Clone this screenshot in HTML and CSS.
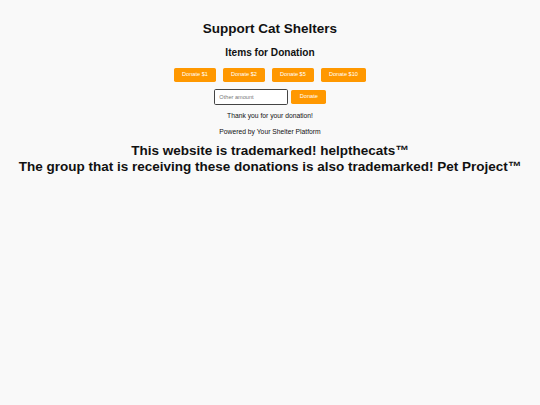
FILE: index.html
```html
<!DOCTYPE html>
<html lang="en">
<head>
<meta charset="utf-8">
<title>Support Cat Shelters</title>
<link rel="stylesheet" href="styles.css">
</head>
<body>
<main class="page">
  <h1 class="title">Support Cat Shelters</h1>
  <h2 class="subtitle">Items for Donation</h2>
  <div class="amounts">
    <button class="btn">Donate $1</button>
    <button class="btn">Donate $2</button>
    <button class="btn">Donate $5</button>
    <button class="btn">Donate $10</button>
  </div>
  <div class="custom">
    <input class="amount-input" type="text" placeholder="Other amount">
    <button class="btn">Donate</button>
  </div>
  <p class="thanks">Thank you for your donation!</p>
  <p class="powered">Powered by Your Shelter Platform</p>
  <div class="trademark">
    <div>This website is trademarked! helpthecats™</div>
    <div>The group that is receiving these donations is also trademarked! Pet Project™</div>
  </div>
</main>
</body>
</html>
```
FILE: styles.css
```css
html, body {
  margin: 0;
  padding: 0;
  background: #f9f9f9;
}
body {
  font-family: "Liberation Sans", Arial, sans-serif;
  color: #111;
}
.page {
  display: flex;
  flex-direction: column;
  align-items: center;
  text-align: center;
}
.title {
  font-size: 13.5px;
  line-height: 15.5px;
  font-weight: bold;
  margin: 20.6px 0 0;
}
.subtitle {
  font-size: 10.125px;
  line-height: 11.6px;
  font-weight: bold;
  margin: 10.6px 0 0;
}
.amounts {
  display: flex;
  gap: 6.3px;
  margin-top: 10px;
}
.btn {
  font-family: "Liberation Sans", Arial, sans-serif;
  font-size: 5.625px;
  line-height: 5.6px;
  padding: 4.2px 8.4px;
  background: #ff9800;
  color: #fff;
  border: none;
  border-radius: 1.7px;
  margin: 0;
}
.custom {
  display: flex;
  align-items: center;
  gap: 3.6px;
  margin-top: 6.6px;
}
.amount-input {
  box-sizing: border-box;
  width: 74px;
  height: 16.3px;
  margin: 0;
  padding: 0 4.6px;
  font-family: "Liberation Sans", Arial, sans-serif;
  font-size: 5.625px;
  border: 1px solid #444;
  border-radius: 1.7px;
  background: #fff;
  outline: none;
}
.amount-input::placeholder {
  color: #777;
}
.thanks {
  font-size: 6.75px;
  line-height: 7.76px;
  margin: 6.5px 0 0;
}
.powered {
  font-size: 6.75px;
  line-height: 7.76px;
  margin: 8.6px 0 0;
}
.trademark {
  font-size: 13.5px;
  line-height: 16px;
  font-weight: bold;
  margin-top: 7.4px;
}
```
